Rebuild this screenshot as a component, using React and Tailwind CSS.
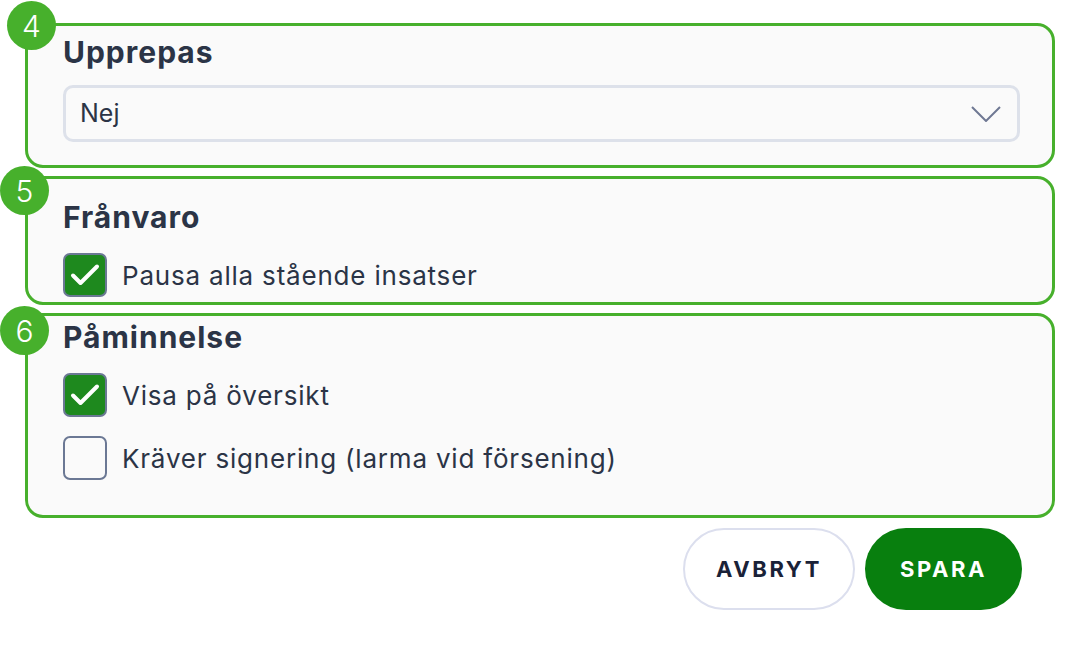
import React from 'react';

const font = { fontFamily: 'Inter, "Noto Sans", sans-serif' };

function Badge({ n, className }) {
  return (
    <div className={`absolute w-[49px] h-[49px] rounded-full bg-[#47b02c] text-white flex items-center justify-center text-[30px] font-light leading-none ${className}`}>
      {n}
    </div>
  );
}

function Box({ n, badgeClass, className, children }) {
  return (
    <div className={`relative border-[3px] border-[#47b02c] rounded-[18px] bg-[#fafafa] pl-[35px] pr-[32px] ${className}`}>
      <Badge n={n} className={badgeClass} />
      {children}
    </div>
  );
}

function Check({ checked, label }) {
  return (
    <label className="flex items-center gap-[15px] h-[44px]">
      <span className={`w-[44px] h-[44px] rounded-[7px] border-2 border-[#6b7894] flex items-center justify-center ${checked ? 'bg-[#1e891e]' : 'bg-[#fafafa]'}`}>
        {checked && (
          <svg width="32" height="32" viewBox="0 0 32 32" fill="none">
            <path d="M4 16.5l7.5 7.5L28 7.5" stroke="white" strokeWidth="4" strokeLinecap="round" strokeLinejoin="round" />
          </svg>
        )}
      </span>
      <span className="text-[26px] tracking-[0.8px] text-[#2b3446]">{label}</span>
    </label>
  );
}

export default function App() {
  return (
    <div className="w-[1068px] h-[655px] bg-white pt-[23px] pl-[25px] pr-[13px]" style={font}>
      <div className="flex flex-col gap-[8px]">
        {/* UPPREPAS */}
        <Box n="4" badgeClass="-left-[21px] -top-[25px]" className="pt-[9px] pb-[23px]">
          <h2 className="text-[30px] leading-[34px] font-bold tracking-[1px] text-[#2b3446]">Upprepas</h2>
          <div className="mt-[16px] h-[57px] border-[3px] border-[#dde1ea] rounded-[10px] bg-[#fafafa] pl-[14px] pr-[16px] flex items-center justify-between">
            <span className="text-[25px] text-[#2b3446]">Nej</span>
            <svg width="30" height="16" viewBox="0 0 30 16" fill="none">
              <path d="M1 1l14 14L29 1" stroke="#6f7893" strokeWidth="2" />
            </svg>
          </div>
        </Box>

        {/* FRÅNVARO */}
        <Box n="5" badgeClass="-left-[28px] -top-[13px]" className="pt-[21px] pb-[5px]">
          <h2 className="text-[30px] leading-[34px] font-bold tracking-[1px] text-[#2b3446]">Frånvaro</h2>
          <div className="mt-[19px]">
            <Check checked label="Pausa alla stående insatser" />
          </div>
        </Box>

        {/* PÅMINNELSE */}
        <Box n="6" badgeClass="-left-[28px] -top-[10px]" className="pt-[4px] pb-[35px]">
          <h2 className="text-[30px] leading-[34px] font-bold tracking-[1px] text-[#2b3446]">Påminnelse</h2>
          <div className="mt-[19px] flex flex-col gap-[19px]">
            <Check checked label="Visa på översikt" />
            <Check label="Kräver signering (larma vid försening)" />
          </div>
        </Box>
      </div>

      <div className="flex justify-end gap-[10px] mt-[10px] pr-[33px]">
        <button className="w-[172px] h-[82px] rounded-full border-2 border-[#dcdfee] bg-white text-[#1a2238] text-[22px] font-bold tracking-[2.6px]">
          AVBRYT
        </button>
        <button className="w-[157px] h-[82px] rounded-full bg-[#087f0e] text-white text-[22px] font-bold tracking-[2.6px]">
          SPARA
        </button>
      </div>
    </div>
  );
}
